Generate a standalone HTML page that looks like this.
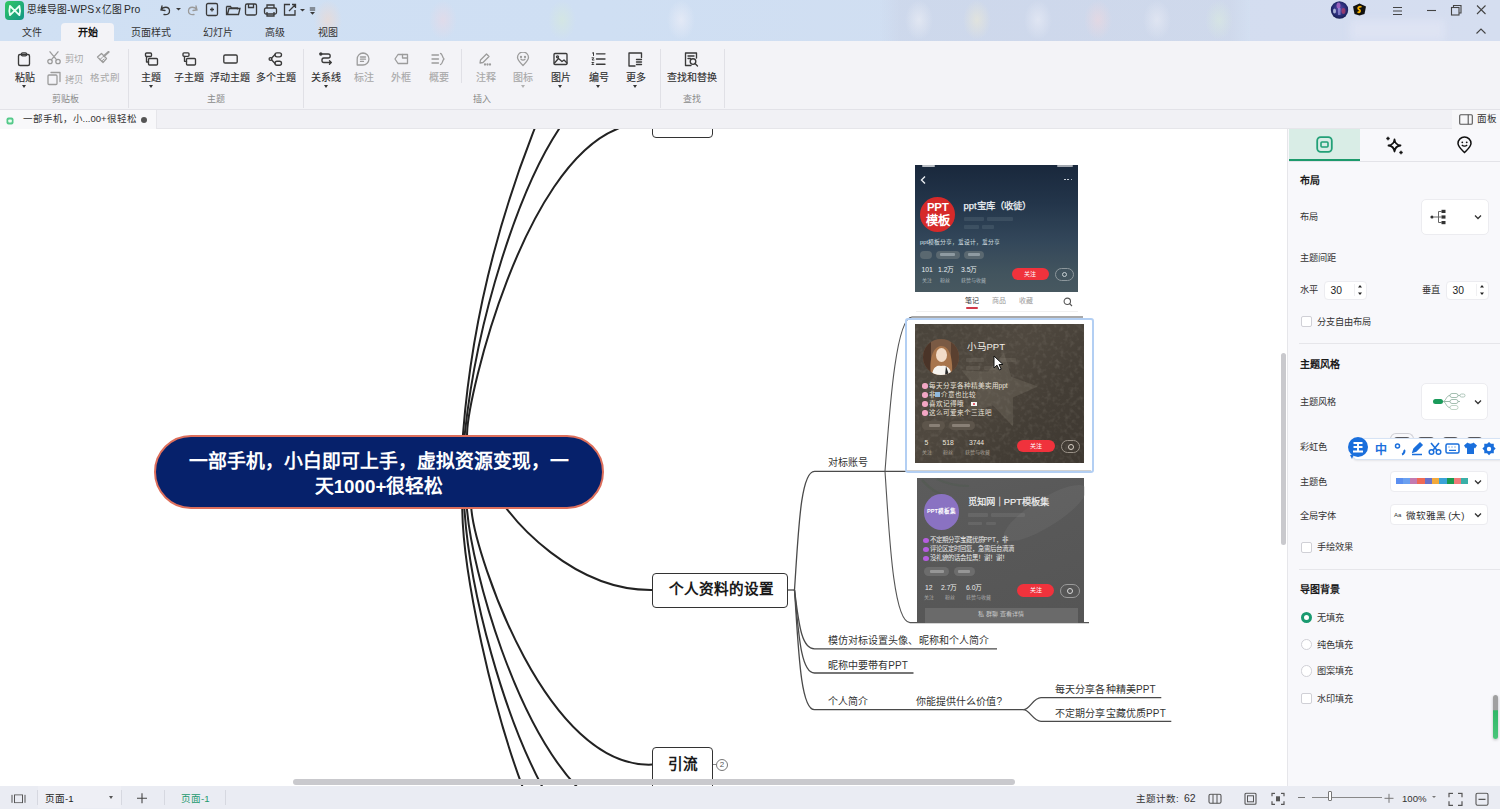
<!DOCTYPE html>
<html lang="zh-CN"><head><meta charset="utf-8">
<style>
*{margin:0;padding:0;box-sizing:border-box}
html,body{width:1500px;height:809px;overflow:hidden;background:#fff;font-family:"Liberation Sans",sans-serif;color:#222}
.a{position:absolute}
#title{left:0;top:0;width:1500px;height:41px;background:linear-gradient(90deg,#d0e0f3 0%,#cfdff3 40%,#d1def1 70%,#d5e0f1 100%)}
#ribbon{left:0;top:41px;width:1500px;height:69px;background:#f3f3f7;border-bottom:1px solid #e2e2e8}
#doctabs{left:0;top:110px;width:1500px;height:19px;background:#f1f1f5;border-bottom:1px solid #e6e6ea}
#canvas{left:0;top:129px;width:1287px;height:657px;background:#fff;overflow:hidden}
#panel{left:1287px;top:129px;width:213px;height:657px;background:#f8f8fb;border-left:1px solid #e6e6ea}
#status{left:0;top:786px;width:1500px;height:23px;background:#eaecf3}
.t{position:absolute;white-space:nowrap;line-height:1}
#status .t,#status svg{transform:translateY(1.3px)}
#panel .t{transform:translateY(.9px)}
</style></head>
<body>
<div id="title" class="a">
<div class="a" style="left:0;top:0;width:1500px;height:42px;background:radial-gradient(ellipse 14px 20px at 328px 20px,rgba(245,215,200,.55),transparent),radial-gradient(ellipse 14px 20px at 443px 20px,rgba(240,215,225,.5),transparent),radial-gradient(ellipse 14px 20px at 562px 20px,rgba(215,235,215,.55),transparent),radial-gradient(ellipse 14px 20px at 681px 20px,rgba(240,240,248,.6),transparent),radial-gradient(ellipse 14px 20px at 919px 20px,rgba(238,240,246,.6),transparent),radial-gradient(ellipse 14px 20px at 977px 20px,rgba(240,235,210,.55),transparent),radial-gradient(ellipse 14px 20px at 1038px 20px,rgba(238,240,248,.55),transparent),radial-gradient(ellipse 14px 20px at 1098px 20px,rgba(242,215,220,.55),transparent),radial-gradient(ellipse 14px 20px at 1157px 20px,rgba(236,238,246,.55),transparent),radial-gradient(ellipse 14px 20px at 1219px 20px,rgba(220,238,220,.5),transparent),linear-gradient(90deg,rgba(0,0,0,0) 880px,rgba(200,205,225,.35) 900px,rgba(200,205,225,.35) 1230px,rgba(0,0,0,0) 1250px)"></div><div class="a" style="left:1350px;top:20px;width:95px;height:21px;background:rgba(235,238,248,.55);filter:blur(4px)"></div><div class="a" style="left:1250px;top:0;width:250px;height:41px;background:rgba(215,215,240,.25)"></div>
<svg class="a" style="left:5px;top:1px" width="19" height="19" viewBox="0 0 19 19"><defs><linearGradient id="lg" x1="0" y1="0" x2="1" y2="1"><stop offset="0" stop-color="#30c865"/><stop offset="1" stop-color="#129585"/></linearGradient></defs><rect width="19" height="19" rx="4" fill="url(#lg)"/><path d="M5 5 C4.2 8 4.2 11.5 5 14.2 L9.6 9.6 Z M14.4 5 C15.2 8 15.2 11.5 14.4 14.2 L9.8 9.6 Z" fill="none" stroke="#eafff4" stroke-width="1.8" stroke-linejoin="round"/></svg>
<div class="t" style="left:27px;top:4.5px;font-size:9.8px;color:#2a2a2a">思维导图<span style="font-size:10.4px;word-spacing:-1.5px">-WPS x </span>亿图<span style="font-size:10.4px;word-spacing:-1px"> Pro</span></div>
<svg class="a" style="left:158px;top:1.8px" width="160" height="16" viewBox="0 0 160 16" fill="none" stroke="#3a3a3a" stroke-width="1.3">
<path d="M4 4 L3 8 L7 8.5 M3.2 8 C5 4.5 11 4 11.5 8.5 C12 12 9 13 6 12.5" stroke-linecap="round"/>
<path d="M18 6 l2.5 2.5 l2.5 -2.5z" fill="#3a3a3a" stroke="none"/>
<path d="M38 4 L39 8 L35 8.5 M38.8 8 C37 4.5 31 4 30.5 8.5 C30 12 33 13 36 12.5" stroke="#9a9a9a" stroke-linecap="round"/>
<rect x="48.5" y="1.5" width="11" height="12" rx="1.5"/><path d="M54 5.5v4M52 7.5h4"/>
<path d="M68.5 4.5v8h12l1.5-6h-11l-1.5 6M68.5 4.5h4l1 1.5h6v1.5"/>
<rect x="87.5" y="2" width="11" height="11" rx="1.5"/><path d="M90.5 2v3.5h5V2"/>
<rect x="106.5" y="6" width="12" height="6" rx="1.5"/><path d="M109 6V3h7v3M109 10v4h7v-4"/>
<path d="M132 2.5h-5.5v10.5h10.5v-5M131 9l6.5-6.5M134 2.5h3.5V6"/>
<path d="M142 7 l2.5 2.5 l2.5 -2.5z" fill="#3a3a3a" stroke="none"/>
<path d="M151.8 6h5.4M151.8 8h5.4" stroke-width="1"/><path d="M152 10l2.5 2.8l2.5 -2.8z" fill="#3a3a3a" stroke="none"/>
</svg>
<svg class="a" style="left:1330px;top:1px" width="19" height="18" viewBox="0 0 19 18"><defs><radialGradient id="av" cx=".5" cy=".45" r=".6"><stop offset="0" stop-color="#5a4aa8"/><stop offset=".6" stop-color="#2a2e7a"/><stop offset="1" stop-color="#141a48"/></radialGradient></defs><circle cx="9.5" cy="9" r="8.7" fill="url(#av)"/><ellipse cx="8.5" cy="4.5" rx="2" ry="3" fill="#c070d0" opacity=".7"/><ellipse cx="4.5" cy="10" rx="1.5" ry="2.5" fill="#d0d8f0" opacity=".75"/><ellipse cx="13.5" cy="10" rx="2" ry="3" fill="#d04060" opacity=".6"/><rect x="8" y="7" width="2.5" height="7" fill="#a8a0e8" opacity=".6"/></svg>
<svg class="a" style="left:1352px;top:3px" width="15" height="13" viewBox="0 0 15 13"><path d="M7.5 0.5 L14 3.5 L12.5 11 L7.5 12.5 L2.5 11 L1 3.5Z" fill="#111"/><path d="M9.5 4 C7 3 5 5 7 6.5 C9 7.5 8 10 5.5 9" stroke="#f5b000" stroke-width="1.8" fill="none"/></svg>
<svg class="a" style="left:1390px;top:3px" width="100" height="34" viewBox="0 0 100 34" fill="none" stroke="#444" stroke-width="1.1">
<path d="M3 4.5h9M3 8h9M3 11.5h9"/>
<path d="M37 7.5h9"/>
<rect x="61.5" y="4.5" width="7.5" height="7.5"/><path d="M63.5 4.5V2.5h7.5v7.5h-2"/>
<path d="M87 2.5l8.5 8.5M95.5 2.5L87 11"/>
<path d="M86.5 30.5l4.5-4.5l4.5 4.5"/>
</svg>
<div class="t" style="left:22px;top:28.3px;font-size:10px;color:#333">文件</div>
<div class="a" style="left:61px;top:23px;width:53px;height:19px;background:#f3f3f7;border-radius:4px 4px 0 0"></div>
<div class="t" style="left:78px;top:28.3px;font-size:10px;color:#111;font-weight:bold">开始</div>
<div class="t" style="left:131px;top:28.3px;font-size:10px;color:#333">页面样式</div>
<div class="t" style="left:203px;top:28.3px;font-size:10px;color:#333">幻灯片</div>
<div class="t" style="left:265px;top:28.3px;font-size:10px;color:#333">高级</div>
<div class="t" style="left:318px;top:28.3px;font-size:10px;color:#333">视图</div>
</div>
<div id="ribbon" class="a">
<svg class="a" style="left:17.0px;top:11px" width="15" height="15" viewBox="0 0 15 15" fill="none" stroke="#3a3a3a" stroke-width="1.35" stroke-linecap="round" stroke-linejoin="round"><rect x="1.5" y="2.5" width="11" height="11" rx="1.5"/><rect x="4.5" y="0.8" width="5" height="3" rx="1"/></svg>
<div class="t" style="left:14.5px;top:32px;width:20px;text-align:center;font-size:10px;color:#2e2e2e;-webkit-text-stroke:.12px #2e2e2e">粘贴</div>
<div class="a" style="left:22.0px;top:44px;width:0;height:0;border-left:2.5px solid transparent;border-right:2.5px solid transparent;border-top:3px solid #333"></div>
<svg class="a" style="left:143.5px;top:11px" width="15" height="15" viewBox="0 0 15 15" fill="none" stroke="#3a3a3a" stroke-width="1.35" stroke-linecap="round" stroke-linejoin="round"><rect x="1.5" y="1" width="6" height="3.5" rx="1"/><path d="M2.5 4.5v5.5h2"/><rect x="4.5" y="6.5" width="9" height="6.5" rx="1"/></svg>
<div class="t" style="left:141.0px;top:32px;width:20px;text-align:center;font-size:10px;color:#2e2e2e;-webkit-text-stroke:.12px #2e2e2e">主题</div>
<div class="a" style="left:148.5px;top:44px;width:0;height:0;border-left:2.5px solid transparent;border-right:2.5px solid transparent;border-top:3px solid #333"></div>
<svg class="a" style="left:181.5px;top:11px" width="15" height="15" viewBox="0 0 15 15" fill="none" stroke="#3a3a3a" stroke-width="1.35" stroke-linecap="round" stroke-linejoin="round"><rect x="1" y="0.8" width="6" height="3.5" rx="1"/><path d="M2.5 4.3v5h2"/><rect x="4.5" y="6.5" width="9" height="6.5" rx="1"/></svg>
<div class="t" style="left:174.0px;top:32px;width:30px;text-align:center;font-size:10px;color:#2e2e2e;-webkit-text-stroke:.12px #2e2e2e">子主题</div>
<svg class="a" style="left:222.5px;top:11px" width="15" height="15" viewBox="0 0 15 15" fill="none" stroke="#3a3a3a" stroke-width="1.35" stroke-linecap="round" stroke-linejoin="round"><rect x="0.8" y="3" width="13.4" height="8" rx="1.3"/></svg>
<div class="t" style="left:210.0px;top:32px;width:40px;text-align:center;font-size:10px;color:#2e2e2e;-webkit-text-stroke:.12px #2e2e2e">浮动主题</div>
<svg class="a" style="left:268.0px;top:11px" width="15" height="15" viewBox="0 0 15 15" fill="none" stroke="#3a3a3a" stroke-width="1.35" stroke-linecap="round" stroke-linejoin="round"><circle cx="2.5" cy="7" r="1.4"/><path d="M3.5 6.2L7 2.5M3.5 7.8L7 11.5"/><rect x="7" y="0.8" width="6.5" height="4" rx="2"/><rect x="7" y="9.2" width="6.5" height="4" rx="2"/></svg>
<div class="t" style="left:255.5px;top:32px;width:40px;text-align:center;font-size:10px;color:#2e2e2e;-webkit-text-stroke:.12px #2e2e2e">多个主题</div>
<svg class="a" style="left:318.5px;top:11px" width="15" height="15" viewBox="0 0 15 15" fill="none" stroke="#3a3a3a" stroke-width="1.35" stroke-linecap="round" stroke-linejoin="round"><circle cx="1.8" cy="2" r="1" fill="#3c3c3c"/><path d="M1.8 2h7.5c2.5 0 2.5 4 0 4h-4.5c-2.5 0-2.5 4.5 0 4.5h7.5M10.5 8.8l1.8 1.7l-1.8 1.7"/></svg>
<div class="t" style="left:311.0px;top:32px;width:30px;text-align:center;font-size:10px;color:#2e2e2e;-webkit-text-stroke:.12px #2e2e2e">关系线</div>
<div class="a" style="left:323.5px;top:44px;width:0;height:0;border-left:2.5px solid transparent;border-right:2.5px solid transparent;border-top:3px solid #333"></div>
<svg class="a" style="left:356.0px;top:11px" width="15" height="15" viewBox="0 0 15 15" fill="none" stroke="#9c9c9c" stroke-width="1.3" stroke-linecap="round" stroke-linejoin="round"><path d="M7 1a6 6 0 1 1-0.1 12h-5.7v-5.8A6 6 0 0 1 7 1z"/><path d="M4.5 5h5M4.5 7.2h5M4.5 9.4h3"/></svg>
<div class="t" style="left:353.5px;top:32px;width:20px;text-align:center;font-size:10px;color:#a8a8a8;-webkit-text-stroke:.12px #a8a8a8">标注</div>
<svg class="a" style="left:393.5px;top:11px" width="15" height="15" viewBox="0 0 15 15" fill="none" stroke="#9c9c9c" stroke-width="1.3" stroke-linecap="round" stroke-linejoin="round"><path d="M4 2.5h9.5v9h-9.5l-3-4.5z"/><path d="M8.5 2.5v3.5h5"/></svg>
<div class="t" style="left:391.0px;top:32px;width:20px;text-align:center;font-size:10px;color:#a8a8a8;-webkit-text-stroke:.12px #a8a8a8">外框</div>
<svg class="a" style="left:431.0px;top:11px" width="15" height="15" viewBox="0 0 15 15" fill="none" stroke="#9c9c9c" stroke-width="1.3" stroke-linecap="round" stroke-linejoin="round"><path d="M1 3h6.5M1 7h6.5M1 11h6.5M9.5 1.5c2 0 1.5 3.5 3.5 5.5c-2 2-1.5 5.5-3.5 5.5"/></svg>
<div class="t" style="left:428.5px;top:32px;width:20px;text-align:center;font-size:10px;color:#a8a8a8;-webkit-text-stroke:.12px #a8a8a8">概要</div>
<svg class="a" style="left:478.0px;top:11px" width="15" height="15" viewBox="0 0 15 15" fill="none" stroke="#9c9c9c" stroke-width="1.3" stroke-linecap="round" stroke-linejoin="round"><path d="M2 11l0.5-3l6-6l2.5 2.5l-6 6z"/><circle cx="7" cy="12.5" r=".5" fill="#9c9c9c"/><circle cx="9.5" cy="12.5" r=".5" fill="#9c9c9c"/><circle cx="12" cy="12.5" r=".5" fill="#9c9c9c"/></svg>
<div class="t" style="left:475.5px;top:32px;width:20px;text-align:center;font-size:10px;color:#a8a8a8;-webkit-text-stroke:.12px #a8a8a8">注释</div>
<svg class="a" style="left:515.5px;top:11px" width="15" height="15" viewBox="0 0 15 15" fill="none" stroke="#9c9c9c" stroke-width="1.3" stroke-linecap="round" stroke-linejoin="round"><path d="M7 13.5c-3-3-5.5-5.5-5.5-8a5.5 5.5 0 0 1 11 0c0 2.5-2.5 5-5.5 8z"/><circle cx="5" cy="5" r=".5" fill="#9c9c9c"/><circle cx="9" cy="5" r=".5" fill="#9c9c9c"/><path d="M5 7.3c1 1 3 1 4 0"/></svg>
<div class="t" style="left:513.0px;top:32px;width:20px;text-align:center;font-size:10px;color:#a8a8a8;-webkit-text-stroke:.12px #a8a8a8">图标</div>
<div class="a" style="left:520.5px;top:44px;width:0;height:0;border-left:2.5px solid transparent;border-right:2.5px solid transparent;border-top:3px solid #b0b0b0"></div>
<svg class="a" style="left:553.0px;top:11px" width="15" height="15" viewBox="0 0 15 15" fill="none" stroke="#3a3a3a" stroke-width="1.35" stroke-linecap="round" stroke-linejoin="round"><rect x="1" y="1.5" width="13" height="11" rx="1"/><path d="M1.5 11l4-4.5l3.5 3l2-1.5l3 3"/><circle cx="4.5" cy="4.8" r="1"/></svg>
<div class="t" style="left:550.5px;top:32px;width:20px;text-align:center;font-size:10px;color:#2e2e2e;-webkit-text-stroke:.12px #2e2e2e">图片</div>
<div class="a" style="left:558.0px;top:44px;width:0;height:0;border-left:2.5px solid transparent;border-right:2.5px solid transparent;border-top:3px solid #333"></div>
<svg class="a" style="left:591.0px;top:11px" width="15" height="15" viewBox="0 0 15 15" fill="none" stroke="#3a3a3a" stroke-width="1.35" stroke-linecap="round" stroke-linejoin="round"><path d="M5.5 1.8h8.5M5.5 7h8.5M5.5 12.2h8.5"/><path d="M1.5 1l1-.5v3" stroke-width="1"/><path d="M1 5.8h1.8l-1.8 2.2h2" stroke-width="1"/><path d="M1 10.5h1.8l-1 1l1 1h-1.8" stroke-width="1"/></svg>
<div class="t" style="left:588.5px;top:32px;width:20px;text-align:center;font-size:10px;color:#2e2e2e;-webkit-text-stroke:.12px #2e2e2e">编号</div>
<div class="a" style="left:596.0px;top:44px;width:0;height:0;border-left:2.5px solid transparent;border-right:2.5px solid transparent;border-top:3px solid #333"></div>
<svg class="a" style="left:628.0px;top:11px" width="15" height="15" viewBox="0 0 15 15" fill="none" stroke="#3a3a3a" stroke-width="1.35" stroke-linecap="round" stroke-linejoin="round"><path d="M13.5 5.5v-4.5h-12.5v13h6"/><path d="M8.5 7.5h5M8.5 10h5M8.5 12.5h5"/></svg>
<div class="t" style="left:625.5px;top:32px;width:20px;text-align:center;font-size:10px;color:#2e2e2e;-webkit-text-stroke:.12px #2e2e2e">更多</div>
<div class="a" style="left:633.0px;top:44px;width:0;height:0;border-left:2.5px solid transparent;border-right:2.5px solid transparent;border-top:3px solid #333"></div>
<svg class="a" style="left:684.0px;top:11px" width="15" height="15" viewBox="0 0 15 15" fill="none" stroke="#3a3a3a" stroke-width="1.35" stroke-linecap="round" stroke-linejoin="round"><path d="M7 13.5h-5.5v-12.5h11v5"/><path d="M4 4h6M4 6.5h2.5"/><circle cx="9" cy="9.5" r="2.8"/><path d="M11 11.5l2.5 2.5"/></svg>
<div class="t" style="left:666.5px;top:32px;width:50px;text-align:center;font-size:10px;color:#2e2e2e;-webkit-text-stroke:.12px #2e2e2e">查找和替换</div>
<svg class="a" style="left:47px;top:10px" width="15" height="15" viewBox="0 0 15 15" fill="none" stroke="#9c9c9c" stroke-width="1.3" stroke-linecap="round" stroke-linejoin="round"><circle cx="3" cy="10.5" r="2.2"/><circle cx="11" cy="10.5" r="2.2"/><path d="M4.3 8.8L11 0.8M9.7 8.8L3 0.8"/></svg>
<div class="t" style="left:65px;top:13.5px;font-size:9.3px;color:#a8a8a8">剪切</div>
<svg class="a" style="left:47px;top:30px" width="15" height="15" viewBox="0 0 15 15" fill="none" stroke="#9c9c9c" stroke-width="1.3" stroke-linecap="round" stroke-linejoin="round"><rect x="1" y="4" width="9" height="9.5" rx="1"/><path d="M4 1.5h9v9"/></svg>
<div class="t" style="left:65px;top:34.5px;font-size:9.3px;color:#a8a8a8">拷贝</div>
<svg class="a" style="left:96px;top:10px" width="15" height="15" viewBox="0 0 15 15" fill="none" stroke="#9c9c9c" stroke-width="1.3" stroke-linecap="round" stroke-linejoin="round"><path d="M1.5 6 L5.5 2.5 L10.5 7.5 L7 11.5 Z"/><path d="M4 8.5 L6.5 6.2 M5.8 10 L8 8" stroke-width="1"/><path d="M8 5 L12.5 1" stroke-width="2.2"/></svg>
<div class="t" style="left:90px;top:32px;font-size:9.5px;color:#a8a8a8">格式刷</div>
<div class="t" style="left:52.0px;top:54px;width:27px;text-align:center;font-size:9px;color:#8a8a8a">剪贴板</div>
<div class="t" style="left:207.0px;top:54px;width:18px;text-align:center;font-size:9px;color:#8a8a8a">主题</div>
<div class="t" style="left:472.5px;top:54px;width:18px;text-align:center;font-size:9px;color:#8a8a8a">插入</div>
<div class="t" style="left:683.0px;top:54px;width:18px;text-align:center;font-size:9px;color:#8a8a8a">查找</div>
<div class="a" style="left:128px;top:8px;width:1px;height:59px;background:#e0e0e6"></div>
<div class="a" style="left:303px;top:8px;width:1px;height:59px;background:#e0e0e6"></div>
<div class="a" style="left:461px;top:8px;width:1px;height:34px;background:#e0e0e6"></div>
<div class="a" style="left:659.5px;top:8px;width:1px;height:59px;background:#e0e0e6"></div>
<div class="a" style="left:724px;top:8px;width:1px;height:59px;background:#e0e0e6"></div>
</div><!--ribbon-end-->
<div id="doctabs" class="a">
<div class="a" style="left:0;top:0;width:157px;height:19px;background:#f8f8fa;border-right:1px solid #e6e6ea"></div>
<svg class="a" style="left:6px;top:6px" width="9" height="9" viewBox="0 0 9 9"><rect x=".5" y="1.5" width="7" height="7" rx="2" fill="#55c98a"/><rect x="2.3" y="3.5" width="3.5" height="3" rx=".8" fill="#e8fff0"/></svg>
<div class="t" style="left:22.5px;top:3.8px;font-size:9.5px;color:#333">一部手机，小...00+很轻松</div>
<div class="a" style="left:141px;top:6.5px;width:6px;height:6px;border-radius:50%;background:#555"></div>
<div class="a" style="left:1452px;top:0;width:48px;height:19px;background:#f7f7f9"></div>
<svg class="a" style="left:1459px;top:4px" width="14" height="11" viewBox="0 0 14 11"><rect x=".7" y=".7" width="12.6" height="9.6" rx="1" stroke="#555" stroke-width="1.1" fill="none"/><path d="M9.2 .7v9.6" stroke="#555" stroke-width="1.1"/></svg>
<div class="t" style="left:1477px;top:4px;font-size:9.6px;color:#333">面板</div>
</div><!--doctabs-end-->
<div id="canvas" class="a"><svg class="a" style="left:0;top:0" width="1287" height="658" viewBox="0 129 1287 658"><path d="M462.3,442.9 L463.1,432.9 C475.6,273.4 523.4,158.0 534.5,129.0 L538.8,117.8" fill="none" stroke="#222" stroke-width="2"/><path d="M463.9,442.8 L464.9,432.9 C477.2,316.3 519.1,189.0 559.0,129.0 L565.5,118.9" fill="none" stroke="#222" stroke-width="2"/><path d="M466.8,442.9 L467.1,432.9 C468.3,393.2 522.8,167.2 617.0,129.0 L627.9,123.9" fill="none" stroke="#222" stroke-width="2"/><path d="M462.1,500.6 L462.3,510.6 C463.3,574.3 491.6,706.1 524.5095539033457,792.0" fill="none" stroke="#222" stroke-width="2"/><path d="M463.8,500.6 L464.5,510.6 C470.3,593.6 503.4,715.9 545.1026022304833,792.0" fill="none" stroke="#222" stroke-width="2"/><path d="M466.2,500.6 L467.1,510.6 C472.7,572.3 515.2,726.2 581.9734944237917,792.0" fill="none" stroke="#222" stroke-width="2"/><path d="M470.5,500.7 L471.5,510.6 C476.5,558.5 546.9,768.9 652.0,764.6" fill="none" stroke="#222" stroke-width="2"/><path d="M501.7,502.4 L507.9,510.3 C511.6,515.1 569.8,590.8 652.0,590.0" fill="none" stroke="#222" stroke-width="2"/><path d="M787,590 L794.5,590" fill="none" stroke="#4a4a4a" stroke-width="1.3"/><path d="M794.5,590 C798.5,530.65 800.5,471.3 814.5,471.3 L1091,471.3" fill="none" stroke="#4a4a4a" stroke-width="1.3"/><path d="M794.5,590 C798.5,619.4 800.5,648.8 814.5,648.8 L997,648.8" fill="none" stroke="#4a4a4a" stroke-width="1.3"/><path d="M794.5,590 C798.5,631.5 800.5,673 814.5,673 L913.5,673" fill="none" stroke="#4a4a4a" stroke-width="1.3"/><path d="M794.5,590 C798.5,649.85 800.5,709.7 814.5,709.7 L1023.3,709.7" fill="none" stroke="#4a4a4a" stroke-width="1.3"/><path d="M885,471.3 C889,420 895,317 912,317 L1083,317" fill="none" stroke="#555" stroke-width="1.1"/><path d="M885,471.3 C889,530 893,622.6 910,622.6 L1089,622.6" fill="none" stroke="#555" stroke-width="1.1"/><path d="M1023.3,709.7 C1030,709.7 1033,697.6 1041,697.6 L1161.3,697.6" fill="none" stroke="#4a4a4a" stroke-width="1.3"/><path d="M1023.3,709.7 C1030,709.7 1033,721.3 1041,721.3 L1171.3,721.3" fill="none" stroke="#4a4a4a" stroke-width="1.3"/></svg>
<div class="a" style="left:154px;top:305.5px;width:450px;height:74.5px;border-radius:38px;background:#06216b;border:2.2px solid #dd6f5c"></div>
<div class="t" style="left:154px;top:320px;width:450px;text-align:center;font-size:18.8px;font-weight:bold;color:#fff;line-height:25px">一部手机，小白即可上手，虚拟资源变现，一<br>天1000+很轻松</div>
<div class="a" style="left:652px;top:-20px;width:61px;height:28.5px;border:1.8px solid #333;border-radius:4px;background:#fff"></div>
<div class="a" style="left:652px;top:444.3px;width:136px;height:34.5px;border:1.8px solid #333;border-radius:4px;background:#fff"></div>
<div class="t" style="left:653px;top:453.3px;width:136px;text-align:center;font-size:14.6px;font-weight:bold;color:#1a1a1a">个人资料的设置</div>
<div class="a" style="left:652px;top:617.8px;width:61px;height:50px;border:1.8px solid #333;border-radius:4px;background:#fff"></div>
<div class="t" style="left:652.5px;top:627.8px;width:61px;text-align:center;font-size:14.6px;font-weight:bold;color:#1a1a1a">引流</div>
<div class="a" style="left:713px;top:635.2px;width:3px;height:1px;background:#888"></div><div class="a" style="left:716px;top:629.6px;width:12px;height:12px;border:1px solid #777;border-radius:50%;font-size:8px;line-height:10px;text-align:center;color:#555">2</div>
<div class="t" style="left:827.5px;top:328.5px;font-size:10px;letter-spacing:.1px;color:#333">对标账号</div>
<div class="t" style="left:827.5px;top:507px;font-size:10px;letter-spacing:.12px;color:#333">模仿对标设置头像、昵称和个人简介</div>
<div class="t" style="left:827.5px;top:531.5px;font-size:10px;letter-spacing:.12px;color:#333">昵称中要带有PPT</div>
<div class="t" style="left:827.5px;top:567.5px;font-size:10px;letter-spacing:.12px;color:#333">个人简介</div>
<div class="t" style="left:915.5px;top:567.5px;font-size:10px;letter-spacing:.12px;color:#333">你能提供什么价值?</div>
<div class="t" style="left:1055px;top:556px;font-size:10px;letter-spacing:.12px;color:#333">每天分享各种精美PPT</div>
<div class="t" style="left:1055px;top:580px;font-size:10px;letter-spacing:.12px;color:#333">不定期分享宝藏优质PPT</div>
<div class="a" style="left:915px;top:36px;width:163px;height:126.5px;background:linear-gradient(180deg,#19283c 0%,#23354a 30%,#33475a 60%,#42545e 85%,#475860 100%)"></div>
<div class="a" style="left:922px;top:36px;width:13px;height:2px;background:rgba(255,255,255,.7);border-radius:1px"></div>
<div class="a" style="left:1057px;top:36px;width:16px;height:2px;background:rgba(255,255,255,.6);border-radius:1px"></div>
<svg class="a" style="left:919px;top:46px" width="10" height="10" viewBox="0 0 10 10"><path d="M6 1.5L2.5 5L6 8.5" stroke="#e8ecf0" stroke-width="1.4" fill="none"/></svg>
<div class="a" style="left:1064.0px;top:49.5px;width:1.6px;height:1.6px;background:#dfe4ea;border-radius:50%"></div>
<div class="a" style="left:1067.3px;top:49.5px;width:1.6px;height:1.6px;background:#dfe4ea;border-radius:50%"></div>
<div class="a" style="left:1070.6px;top:49.5px;width:1.6px;height:1.6px;background:#dfe4ea;border-radius:50%"></div>
<div class="a" style="left:920px;top:67.6px;width:35.4px;height:35.4px;background:#d62a2a;border-radius:50%"></div>
<div class="t" style="left:920px;top:72.5px;width:35.4px;text-align:center;font-size:11.5px;font-weight:bold;color:#fff;letter-spacing:-.3px">PPT</div>
<div class="t" style="left:920px;top:85.6px;width:35.4px;text-align:center;font-size:12.3px;font-weight:bold;color:#fff">模板</div>
<div class="t" style="left:963.5px;top:72px;font-size:9.4px;color:#eef2f5;-webkit-text-stroke:.25px #eef2f5">ppt宝库（收徒）</div>
<div class="a" style="left:964px;top:88px;width:20px;height:3.5px;background:rgba(150,165,175,.16);border-radius:1px"></div>
<div class="a" style="left:987px;top:88px;width:26px;height:3.5px;background:rgba(150,165,175,.16);border-radius:1px"></div>
<div class="a" style="left:964px;top:96px;width:15px;height:3.5px;background:rgba(150,165,175,.16);border-radius:1px"></div>
<div class="a" style="left:982px;top:96px;width:12px;height:3.5px;background:rgba(150,165,175,.16);border-radius:1px"></div>
<div class="t" style="left:920px;top:111px;font-size:5.8px;color:#d9e0e5">ppt模板分享，爱设计，爱分享</div>
<div class="a" style="left:920px;top:121.5px;width:12px;height:8.5px;background:#5a6870;border-radius:5px"></div>
<div class="a" style="left:935.5px;top:121.5px;width:24.5px;height:8.5px;background:#5a6870;border-radius:5px"></div>
<div class="a" style="left:964px;top:121.5px;width:20px;height:8.5px;background:#5a6870;border-radius:5px"></div>
<div class="a" style="left:940px;top:124px;width:15px;height:3px;background:rgba(220,230,235,.4);border-radius:1px"></div>
<div class="a" style="left:968px;top:124px;width:12px;height:3px;background:rgba(220,230,235,.4);border-radius:1px"></div>
<div class="t" style="left:921.5px;top:138.3px;font-size:6.8px;color:#e8edf0">101</div>
<div class="t" style="left:938px;top:138.3px;font-size:6.8px;color:#e8edf0">1.2万</div>
<div class="t" style="left:961px;top:138.3px;font-size:6.8px;color:#e8edf0">3.5万</div>
<div class="t" style="left:922px;top:148.5px;font-size:5px;color:#a9b4ba">关注</div>
<div class="t" style="left:940px;top:148.5px;font-size:5px;color:#a9b4ba">粉丝</div>
<div class="t" style="left:961px;top:148.5px;font-size:5px;color:#a9b4ba">获赞与收藏</div>
<div class="a" style="left:1011.5px;top:139.3px;width:37px;height:12.2px;background:#f0323c;border-radius:6px"></div>
<div class="t" style="left:1011.5px;top:142px;width:37px;text-align:center;font-size:6px;color:#fff">关注</div>
<div class="a" style="left:1055px;top:139px;width:18.5px;height:13px;border:1px solid #8d979c;border-radius:7px"></div>
<div class="a" style="left:1061.5px;top:142.7px;width:5.5px;height:5.5px;border:1.2px solid #c8d0d4;border-radius:50%"></div>
<div class="t" style="left:965px;top:167.5px;font-size:7px;color:#333">笔记</div>
<div class="a" style="left:965.5px;top:178px;width:12px;height:1.5px;background:#d23a4a;border-radius:1px"></div>
<div class="t" style="left:992px;top:167.5px;font-size:7px;color:#9a9a9a">商品</div>
<div class="t" style="left:1019px;top:167.5px;font-size:7px;color:#9a9a9a">收藏</div>
<svg class="a" style="left:1063px;top:168px" width="10" height="10" viewBox="0 0 10 10"><circle cx="4.3" cy="4.3" r="3.2" stroke="#555" stroke-width="1.1" fill="none"/><path d="M6.6 6.6L9 9" stroke="#555" stroke-width="1.1"/></svg>
<div class="a" style="left:916px;top:181.5px;width:162px;height:1px;background:#f0f0f0"></div>
<div class="a" style="left:905.3px;top:189.3px;width:188.5px;height:154.5px;border:2px solid #b3cff3;border-radius:3px"></div>
<div class="a" style="left:915.2px;top:195px;width:169px;height:139px;background:radial-gradient(ellipse 40px 50px at 960px 390px,rgba(120,110,95,.0),transparent),linear-gradient(135deg,#4a443b 0%,#4f483f 40%,#433d35 70%,#3e3831 100%)"></div>
<svg class="a" style="left:915px;top:195px" width="170" height="139" viewBox="0 0 170 139"><defs><filter id="tx" x="0" y="0" width="100%" height="100%"><feTurbulence type="fractalNoise" baseFrequency=".22" numOctaves="2" seed="3"/><feColorMatrix values="0 0 0 0 .75  0 0 0 0 .7  0 0 0 0 .62  0 0 0 1.6 -.75"/></filter></defs><rect width="170" height="139" filter="url(#tx)" opacity=".16"/><path d="M82 28 L94 50 L122 54 L100 70 L106 98 L82 82 L56 96 L64 70 L44 54 L70 50 Z" fill="rgba(130,122,108,.3)" transform="rotate(12 82 62)"/></svg>
<svg class="a" style="left:922.6px;top:209.5px" width="36" height="36" viewBox="0 0 36 36"><defs><clipPath id="avc"><circle cx="18" cy="18" r="18"/></clipPath></defs><g clip-path="url(#avc)"><rect width="36" height="36" fill="#7a5a44"/><rect x="0" y="0" width="8" height="36" fill="#4a3428"/><rect x="28" y="0" width="8" height="36" fill="#5a4030"/><path d="M8 36 C6 22 9 8 18 7 C27 7 30 20 29 36Z" fill="#a8754c"/><ellipse cx="18.5" cy="16" rx="5.5" ry="7" fill="#f2dcc8"/><path d="M9 36 C10 28 14 26 18 27 C23 26 27 28 29 36Z" fill="#f7f4ef"/><path d="M23 27 L26 36 L22 36Z" fill="#2a2a2a"/></g></svg>
<div class="t" style="left:966.5px;top:213.3px;font-size:9.5px;color:#f2eee8">小马PPT</div>
<div class="a" style="left:966px;top:229px;width:18px;height:3.5px;background:rgba(170,160,150,.16);border-radius:1px"></div>
<div class="a" style="left:1000px;top:229px;width:16px;height:3.5px;background:rgba(170,160,150,.14);border-radius:1px"></div>
<div class="a" style="left:966px;top:237px;width:14px;height:3.5px;background:rgba(170,160,150,.16);border-radius:1px"></div>
<div class="a" style="left:984px;top:237px;width:12px;height:3.5px;background:rgba(170,160,150,.14);border-radius:1px"></div>
<div class="a" style="left:922px;top:254.3px;width:5.5px;height:5.5px;background:#f2a6c4;border-radius:50%"></div>
<div class="t" style="left:928.5px;top:253.5px;font-size:6.6px;color:#e8e2da">每天分享各种精美实用ppt</div>
<div class="a" style="left:922px;top:263.3px;width:5.5px;height:5.5px;background:#f2a6c4;border-radius:50%"></div>
<div class="t" style="left:928.5px;top:262.5px;font-size:6.6px;color:#e8e2da">非&nbsp;&nbsp;&nbsp;介意也比较</div>
<div class="a" style="left:922px;top:272.3px;width:5.5px;height:5.5px;background:#f2a6c4;border-radius:50%"></div>
<div class="t" style="left:928.5px;top:271.5px;font-size:6.6px;color:#e8e2da">喜欢记得哦</div>
<div class="a" style="left:922px;top:281.3px;width:5.5px;height:5.5px;background:#f2a6c4;border-radius:50%"></div>
<div class="t" style="left:928.5px;top:280.5px;font-size:6.6px;color:#e8e2da">这么可爱来个三连吧</div>
<div class="a" style="left:934.5px;top:263.3px;width:5.5px;height:4.8px;background:#8fb8dc"></div>
<div class="a" style="left:970.5px;top:272.5px;width:6.5px;height:4.5px;background:#f4f4f4"></div>
<div class="a" style="left:972.5px;top:273.5px;width:2.5px;height:2.5px;background:#e03040;border-radius:50%"></div>
<div class="a" style="left:922.4px;top:292px;width:22.6px;height:9.3px;background:#5d554b;border-radius:5px"></div>
<div class="a" style="left:948.7px;top:292px;width:26.3px;height:9.3px;background:#5d554b;border-radius:5px"></div>
<div class="a" style="left:929px;top:295px;width:11px;height:3px;background:rgba(220,210,200,.35);border-radius:1px"></div>
<div class="a" style="left:952px;top:295px;width:18px;height:3px;background:rgba(220,210,200,.35);border-radius:1px"></div>
<div class="t" style="left:924.5px;top:310.5px;font-size:6.8px;color:#ece6de">5</div>
<div class="t" style="left:942.5px;top:310.5px;font-size:6.8px;color:#ece6de">518</div>
<div class="t" style="left:969px;top:310.5px;font-size:6.8px;color:#ece6de">3744</div>
<div class="t" style="left:922px;top:320.5px;font-size:5px;color:#a8a096">关注</div>
<div class="t" style="left:943px;top:320.5px;font-size:5px;color:#a8a096">粉丝</div>
<div class="t" style="left:965px;top:320.5px;font-size:5px;color:#a8a096">获赞与收藏</div>
<div class="a" style="left:1017.2px;top:310.6px;width:37.8px;height:12.4px;background:#f0323c;border-radius:6.5px"></div>
<div class="t" style="left:1017.2px;top:313.5px;width:37.8px;text-align:center;font-size:6px;color:#fff">关注</div>
<div class="a" style="left:1060.7px;top:311px;width:19.3px;height:13px;border:1px solid #9a9288;border-radius:7px"></div>
<div class="a" style="left:1067.5px;top:314.5px;width:6px;height:6px;border:1.2px solid #d8d0c6;border-radius:50%"></div>
<svg class="a" style="left:992.5px;top:226px" width="11" height="16" viewBox="0 0 11 16"><path d="M1 1 L1 13 L4 10.2 L6.3 15 L8.2 14.1 L6 9.5 L10 9.5 Z" fill="#fff" stroke="#111" stroke-width="1"/></svg>
<div class="a" style="left:916.8px;top:349px;width:167.4px;height:144.5px;background:linear-gradient(160deg,#5c5c5c 0%,#585858 50%,#555 100%)"></div>
<svg class="a" style="left:917px;top:349px" width="168" height="145" viewBox="0 0 168 145"><ellipse cx="128" cy="35" rx="48" ry="14" transform="rotate(-32 128 35)" fill="rgba(130,130,130,.2)"/><path d="M5 2 C12 10 20 16 30 18" stroke="#4a5a48" stroke-width="2.5" fill="none" opacity=".35"/><path d="M20 1 C30 6 40 8 52 8" stroke="#4a5a48" stroke-width="2" fill="none" opacity=".3"/></svg>
<div class="a" style="left:923.7px;top:365.2px;width:35.7px;height:35.7px;background:#8a72c2;border-radius:50%"></div>
<div class="t" style="left:923.7px;top:380px;width:35.7px;text-align:center;font-size:5.6px;font-weight:bold;color:#fff">PPT模板集</div>
<div class="t" style="left:967.8px;top:368.8px;font-size:9.3px;color:#f2f2f2;-webkit-text-stroke:.2px #f2f2f2">觅知网｜PPT模板集</div>
<div class="a" style="left:968px;top:384px;width:20px;height:3.5px;background:rgba(175,175,175,.16);border-radius:1px"></div>
<div class="a" style="left:991px;top:384px;width:34px;height:3.5px;background:rgba(175,175,175,.14);border-radius:1px"></div>
<div class="a" style="left:968px;top:392.5px;width:14px;height:3.5px;background:rgba(175,175,175,.16);border-radius:1px"></div>
<div class="a" style="left:986px;top:392.5px;width:10px;height:3.5px;background:rgba(175,175,175,.14);border-radius:1px"></div>
<div class="a" style="left:922.5px;top:408.79999999999995px;width:6px;height:5.5px;background:#b55ee0;border-radius:50% 50% 50% 50%"></div>
<div class="t" style="left:929.5px;top:408px;font-size:6.4px;color:#e8e8e8">不定期分享宝藏优质PPT，非&nbsp;&nbsp;</div>
<div class="a" style="left:922.5px;top:417.79999999999995px;width:6px;height:5.5px;background:#b55ee0;border-radius:50% 50% 50% 50%"></div>
<div class="t" style="left:929.5px;top:417px;font-size:6.4px;color:#e8e8e8">评论区定时回复，急需后台滴滴</div>
<div class="a" style="left:922.5px;top:426.79999999999995px;width:6px;height:5.5px;background:#b55ee0;border-radius:50% 50% 50% 50%"></div>
<div class="t" style="left:929.5px;top:426px;font-size:6.4px;color:#e8e8e8">没礼貌的话会拉黑！谢！谢！</div>
<div class="a" style="left:923.7px;top:438px;width:25px;height:8.5px;background:#6c6c6c;border-radius:5px"></div>
<div class="a" style="left:954px;top:438px;width:20.5px;height:8.5px;background:#6c6c6c;border-radius:5px"></div>
<div class="a" style="left:930px;top:440.5px;width:14px;height:3px;background:rgba(230,230,230,.35);border-radius:1px"></div>
<div class="a" style="left:958px;top:440.5px;width:12px;height:3px;background:rgba(230,230,230,.35);border-radius:1px"></div>
<div class="t" style="left:925px;top:455.5px;font-size:6.8px;color:#eee">12</div>
<div class="t" style="left:941px;top:455.5px;font-size:6.8px;color:#eee">2.7万</div>
<div class="t" style="left:966px;top:455.5px;font-size:6.8px;color:#eee">6.0万</div>
<div class="t" style="left:923.5px;top:465.5px;font-size:5px;color:#aaa">关注</div>
<div class="t" style="left:945px;top:465.5px;font-size:5px;color:#aaa">粉丝</div>
<div class="t" style="left:966px;top:465.5px;font-size:5px;color:#aaa">获赞与收藏</div>
<div class="a" style="left:1017px;top:455px;width:37px;height:13px;background:#f0323c;border-radius:6.5px"></div>
<div class="t" style="left:1017px;top:458px;width:37px;text-align:center;font-size:6px;color:#fff">关注</div>
<div class="a" style="left:1060px;top:455px;width:19.5px;height:13.5px;border:1px solid #9a9a9a;border-radius:7px"></div>
<div class="a" style="left:1066.8px;top:458.70000000000005px;width:6px;height:6px;border:1.2px solid #d8d8d8;border-radius:50%"></div>
<div class="a" style="left:924.5px;top:478.6px;width:153px;height:15px;background:#6a6a6a"></div>
<div class="t" style="left:924.5px;top:482px;width:153px;text-align:center;font-size:6px;color:#c8c8c8">私 群聊  查看详情</div><div class="a" style="left:293px;top:650px;width:722px;height:6px;border-radius:3px;background:#c9c9cd"></div><div class="a" style="left:1281px;top:224px;width:5px;height:192px;border-radius:3px;background:#c9c9cd"></div></div><!--canvas-end-->
<div id="panel" class="a"><div class="a" style="left:1px;top:0px;width:70.5px;height:31px;background:#d9ede6"></div>
<div class="a" style="left:1px;top:29.5px;width:70.5px;height:2.5px;background:#1d9a6c"></div>
<div class="a" style="left:1px;top:32px;width:212px;height:1px;background:#e3e3e8"></div>
<svg class="a" style="left:28px;top:7px" width="17" height="17" viewBox="0 0 17 17" ><rect x="1.2" y="1.2" width="14.6" height="14.6" rx="3.5" stroke="#22a077" stroke-width="1.8" fill="none"/><rect x="5" y="6" width="7" height="5" rx="1" stroke="#22a077" stroke-width="1.6" fill="none"/></svg>
<svg class="a" style="left:97px;top:7px" width="19" height="19" viewBox="0 0 19 19" ><path d="M9.5 3.5 C10 7.5 11.5 9 15.5 9.5 C11.5 10 10 11.5 9.5 15.5 C9 11.5 7.5 10 3.5 9.5 C7.5 9 9 7.5 9.5 3.5Z" stroke="#111" stroke-width="1.8" fill="none" stroke-linejoin="round"/><path d="M3 .8v3.4M1.3 2.5h3.4M16 14.8v3.4M14.3 16.5h3.4" stroke="#111" stroke-width="1.4"/></svg>
<svg class="a" style="left:168px;top:7px" width="17" height="18" viewBox="0 0 17 18" ><path d="M8.5 16.5 C5 13 2 10.5 2 7.5 A6.5 6.5 0 0 1 15 7.5 C15 10.5 12 13 8.5 16.5Z" stroke="#111" stroke-width="1.5" fill="none"/><circle cx="6.3" cy="6.3" r=".9" fill="#111"/><circle cx="10.7" cy="6.3" r=".9" fill="#111"/><path d="M5.8 9c1.5 1.5 3.9 1.5 5.4 0" stroke="#111" stroke-width="1.2" fill="none"/></svg>
<div class="t" style="left:11.799999999999955px;top:45.5px;font-size:10px;font-weight:bold;color:#1a1a1a">布局</div>
<div class="t" style="left:11.799999999999955px;top:82.5px;font-size:9.2px;color:#333">布局</div>
<div class="a" style="left:133px;top:69.5px;width:68px;height:36px;background:#fff;border:1px solid #ececf0;border-radius:5px"></div>
<svg class="a" style="left:141px;top:78px" width="22" height="20" viewBox="0 0 22 20" ><circle cx="3" cy="10" r="1.6" fill="#333"/><path d="M4.5 10h5M9.5 4.5v11M9.5 4.5h3M9.5 10h3M9.5 15.5h3" stroke="#666" stroke-width="1"/><rect x="12.5" y="2.8" width="4" height="3.2" fill="#333"/><rect x="12.5" y="8.4" width="4" height="3.2" fill="#333"/><rect x="12.5" y="14" width="4" height="3.2" fill="#333"/></svg>
<svg class="a" style="left:186px;top:85px" width="8" height="6" viewBox="0 0 8 6" ><path d="M1 1.5l3 3l3-3" stroke="#333" stroke-width="1.3" fill="none"/></svg>
<div class="t" style="left:11.799999999999955px;top:123.5px;font-size:9.2px;color:#333">主题间距</div>
<div class="t" style="left:11.799999999999955px;top:155.5px;font-size:9.2px;color:#333">水平</div>
<div class="a" style="left:36px;top:152px;width:43px;height:18.5px;background:#fff;border:1px solid #ececf0;border-radius:4px"></div>
<div class="t" style="left:42.5px;top:155.5px;font-size:10.3px;color:#222">30</div>
<svg class="a" style="left:68px;top:154px" width="8" height="14" viewBox="0 0 8 14" ><path d="M2 4.5l2-2.5l2 2.5zM2 9.5l2 2.5l2-2.5z" fill="#222"/></svg>
<div class="a" style="left:66px;top:155px;width:1px;height:12px;background:#f0f0f2"></div>
<div class="t" style="left:134px;top:155.5px;font-size:9.2px;color:#333">垂直</div>
<div class="a" style="left:158px;top:152px;width:43px;height:18.5px;background:#fff;border:1px solid #ececf0;border-radius:4px"></div>
<div class="t" style="left:164.5px;top:155.5px;font-size:10.3px;color:#222">30</div>
<svg class="a" style="left:190px;top:154px" width="8" height="14" viewBox="0 0 8 14" ><path d="M2 4.5l2-2.5l2 2.5zM2 9.5l2 2.5l2-2.5z" fill="#222"/></svg>
<div class="a" style="left:188px;top:155px;width:1px;height:12px;background:#f0f0f2"></div>
<div class="a" style="left:13px;top:187px;width:11px;height:11px;background:#fff;border:1px solid #d0d0d6;border-radius:2px"></div>
<div class="t" style="left:29px;top:187.5px;font-size:9.2px;color:#333">分支自由布局</div>
<div class="a" style="left:11px;top:214px;width:202px;height:1px;background:#e6e6ea"></div>
<div class="t" style="left:11.799999999999955px;top:229.5px;font-size:10px;font-weight:bold;color:#1a1a1a">主题风格</div>
<div class="t" style="left:11.799999999999955px;top:268px;font-size:9.2px;color:#333">主题风格</div>
<div class="a" style="left:133px;top:254px;width:67px;height:36.5px;background:#fff;border:1px solid #ececf0;border-radius:5px"></div>
<svg class="a" style="left:144px;top:263px" width="40" height="18" viewBox="0 0 40 18" ><rect x="1" y="7" width="10" height="5" rx="2.5" fill="#1a9a5a"/><path d="M11 9.5 C14 9.5 14 3.5 18 3.5 M11 9.5 H18 M11 9.5 C14 9.5 14 15.5 18 15.5" stroke="#9ab8a8" stroke-width="1" fill="none"/><rect x="18" y="1.5" width="8" height="4" rx="2" stroke="#9ab8a8" stroke-width=".9" fill="none"/><rect x="18" y="7.5" width="8" height="4" rx="2" stroke="#9ab8a8" stroke-width=".9" fill="none"/><rect x="18" y="13.5" width="8" height="4" rx="2" stroke="#b8d0c0" stroke-width=".9" fill="none"/><path d="M26 3.5h2M26 9.5h2" stroke="#9ab8a8" stroke-width=".9"/><rect x="28" y="2" width="5" height="3" rx="1.5" stroke="#9ab8a8" stroke-width=".8" fill="none"/></svg>
<svg class="a" style="left:186px;top:270px" width="8" height="6" viewBox="0 0 8 6" ><path d="M1 1.5l3 3l3-3" stroke="#333" stroke-width="1.3" fill="none"/></svg>
<div class="t" style="left:11.799999999999955px;top:312.5px;font-size:9.2px;color:#333">彩虹色</div>
<div class="a" style="left:102px;top:303.5px;width:23.5px;height:10px;border:1.2px solid #d0d0d6;border-bottom:none;border-radius:6px 6px 0 0"></div>
<div class="a" style="left:106px;top:307.5px;width:15.5px;height:4px;background:#5a5a5e;border-radius:3px 3px 0 0"></div>
<div class="a" style="left:130px;top:307.5px;width:15.5px;height:4px;background:#5a5a5e;border-radius:3px 3px 0 0"></div>
<div class="a" style="left:154.5px;top:307.5px;width:15.5px;height:4px;background:#5a5a5e;border-radius:3px 3px 0 0"></div>
<div class="a" style="left:178.5px;top:307.5px;width:15.5px;height:4px;background:#5a5a5e;border-radius:3px 3px 0 0"></div>
<div class="t" style="left:11.799999999999955px;top:347.5px;font-size:9.2px;color:#333">主题色</div>
<div class="a" style="left:102px;top:341.5px;width:98px;height:21px;background:#fff;border:1px solid #ececf0;border-radius:4px"></div>
<div class="a" style="left:107.5px;top:349px;width:7.3px;height:6px;background:#5b8ff0"></div>
<div class="a" style="left:114.79999999999995px;top:349px;width:7.3px;height:6px;background:#6aa0f0"></div>
<div class="a" style="left:122.09999999999991px;top:349px;width:7.3px;height:6px;background:#c47ab0"></div>
<div class="a" style="left:129.4000000000001px;top:349px;width:7.3px;height:6px;background:#ef6a55"></div>
<div class="a" style="left:136.70000000000005px;top:349px;width:7.3px;height:6px;background:#6a72c8"></div>
<div class="a" style="left:144.0px;top:349px;width:7.3px;height:6px;background:#f2a93b"></div>
<div class="a" style="left:151.29999999999995px;top:349px;width:7.3px;height:6px;background:#3ba3d8"></div>
<div class="a" style="left:158.5999999999999px;top:349px;width:7.3px;height:6px;background:#1a9a50"></div>
<div class="a" style="left:165.9000000000001px;top:349px;width:7.3px;height:6px;background:#f07a7a"></div>
<div class="a" style="left:173.20000000000005px;top:349px;width:7.3px;height:6px;background:#3ab0a8"></div>
<svg class="a" style="left:186px;top:350px" width="8" height="6" viewBox="0 0 8 6" ><path d="M1 1.5l3 3l3-3" stroke="#333" stroke-width="1.3" fill="none"/></svg>
<div class="t" style="left:11.799999999999955px;top:381.5px;font-size:9.2px;color:#333">全局字体</div>
<div class="a" style="left:102px;top:375px;width:98px;height:21px;background:#fff;border:1px solid #ececf0;border-radius:4px"></div>
<div class="t" style="left:106px;top:382px;font-size:6px;color:#333">Aa</div>
<div class="t" style="left:117.5px;top:380.5px;font-size:9.6px;color:#333">微软雅黑 (大)</div>
<svg class="a" style="left:186px;top:383px" width="8" height="6" viewBox="0 0 8 6" ><path d="M1 1.5l3 3l3-3" stroke="#333" stroke-width="1.3" fill="none"/></svg>
<div class="a" style="left:13px;top:412.5px;width:11px;height:11px;background:#fff;border:1px solid #d0d0d6;border-radius:2px"></div>
<div class="t" style="left:29px;top:413px;font-size:9.2px;color:#333">手绘效果</div>
<div class="a" style="left:11px;top:439.5px;width:202px;height:1px;background:#e6e6ea"></div>
<div class="t" style="left:11.799999999999955px;top:454.5px;font-size:10px;font-weight:bold;color:#1a1a1a">导图背景</div>
<div class="a" style="left:12.5px;top:482.5px;width:11.5px;height:11.5px;background:#fff;border:3.3px solid #1a9a70;border-radius:50%"></div>
<div class="t" style="left:28.5px;top:483.5px;font-size:9.2px;color:#333">无填充</div>
<div class="a" style="left:12.5px;top:509.5px;width:11.5px;height:11.5px;background:#fff;border:1px solid #d0d0d6;border-radius:50%"></div>
<div class="t" style="left:28.5px;top:510.5px;font-size:9.2px;color:#333">纯色填充</div>
<div class="a" style="left:12.5px;top:536px;width:11.5px;height:11.5px;background:#fff;border:1px solid #d0d0d6;border-radius:50%"></div>
<div class="t" style="left:28.5px;top:537px;font-size:9.2px;color:#333">图案填充</div>
<div class="a" style="left:13px;top:563.5px;width:11px;height:11px;background:#fff;border:1px solid #d0d0d6;border-radius:2px"></div>
<div class="t" style="left:29px;top:564.5px;font-size:9.2px;color:#333">水印填充</div>
<div class="a" style="left:205px;top:566px;width:5px;height:44px;background:linear-gradient(180deg,#a0a0a0 0%,#a0a0a0 33%,#2fb867 36%,#4ac57a 100%);border-radius:3px;box-shadow:0 1px 3px rgba(0,0,0,.25)"></div>
<div class="a" style="left:65px;top:309px;width:148px;height:21.5px;background:#fff;border:1px solid #d6e3f5;border-right:none;border-radius:4px 0 0 4px;box-shadow:0 1px 2px rgba(0,0,0,.08)"></div>
<svg class="a" style="left:59px;top:307px" width="24" height="25" viewBox="0 0 24 25" ><circle cx="11" cy="11" r="10" fill="#1a6fdc"/><path d="M3 19 L7 18 L5 23 Z" fill="#1a6fdc"/><path d="M6.5 7h9M6.5 11h9M6 15.5h10M11 7v8.5" stroke="#fff" stroke-width="1.9"/></svg>
<div class="t" style="left:87px;top:313.5px;font-size:12px;font-weight:bold;color:#1a6fdc">中</div>
<svg class="a" style="left:106px;top:313px" width="14" height="14" viewBox="0 0 14 14" ><circle cx="3.5" cy="4" r="2" stroke="#1a6fdc" stroke-width="1.5" fill="none"/><path d="M10 8 C11 9 10 12 8 12.5" stroke="#1a6fdc" stroke-width="2.2" fill="none"/></svg>
<svg class="a" style="left:122px;top:312px" width="14" height="15" viewBox="0 0 14 15" ><path d="M3 11 L4 8 L10 2 L12 4 L6 10 Z" stroke="#1a6fdc" stroke-width="1.5" fill="#1a6fdc"/><path d="M2 13.5h10" stroke="#1a6fdc" stroke-width="1.5"/></svg>
<svg class="a" style="left:140px;top:312px" width="14" height="15" viewBox="0 0 14 15" ><circle cx="3.5" cy="11" r="2.3" stroke="#1a6fdc" stroke-width="1.5" fill="none"/><circle cx="10.5" cy="11" r="2.3" stroke="#1a6fdc" stroke-width="1.5" fill="none"/><path d="M5 9.3L11 2M9 9.3L3 2" stroke="#1a6fdc" stroke-width="1.6"/></svg>
<svg class="a" style="left:157px;top:313px" width="15" height="13" viewBox="0 0 15 13" ><rect x="1" y="2" width="13" height="9" rx="1.5" stroke="#1a6fdc" stroke-width="1.5" fill="none"/><path d="M3.5 5h1M6.5 5h1M9.5 5h1M4 8.3h7" stroke="#1a6fdc" stroke-width="1.2"/></svg>
<svg class="a" style="left:175px;top:312px" width="15" height="14" viewBox="0 0 15 14" ><path d="M4.5 1.5 L1 4.5 L3 7.5 L4 6.5 V13 H11 V6.5 L12 7.5 L14 4.5 L10.5 1.5 C9.5 3 5.5 3 4.5 1.5Z" fill="#1a6fdc"/></svg>
<svg class="a" style="left:194px;top:312px" width="14" height="15" viewBox="0 0 14 15" ><path d="M7 1 L9 3 L12 3 L12 6 L14 8 L12 10 L12 13 L9 13 L7 15 L5 13 L2 13 L2 10 L0 8 L2 6 L2 3 L5 3Z" fill="#1a6fdc" transform="scale(.95) translate(.4,0)"/><circle cx="7" cy="8" r="2.2" fill="#fff"/></svg></div><!--panel-end-->
<div id="status" class="a">
<svg class="a" style="left:11px;top:7px" width="15" height="9" viewBox="0 0 15 9"><path d="M1 .5v8M14 .5v8" stroke="#555" stroke-width="1"/><rect x="3.5" y=".5" width="8" height="8" stroke="#555" stroke-width="1" fill="none"/></svg>
<div class="a" style="left:37px;top:4px;width:1px;height:15px;background:#d6d8e0"></div>
<div class="a" style="left:38px;top:0;width:83px;height:22px;background:#eeeff5"></div>
<div class="t" style="left:45px;top:6.5px;font-size:9.6px;color:#222">页面-1</div>
<div class="a" style="left:109px;top:10px;width:0;height:0;border-left:2.5px solid transparent;border-right:2.5px solid transparent;border-top:3px solid #555"></div>
<div class="a" style="left:121px;top:4px;width:1px;height:15px;background:#d6d8e0"></div>
<svg class="a" style="left:136px;top:5px" width="12" height="12" viewBox="0 0 12 12"><path d="M6 1v10M1 6h10" stroke="#444" stroke-width="1.1"/></svg>
<div class="a" style="left:164px;top:4px;width:1px;height:15px;background:#d6d8e0"></div>
<div class="t" style="left:181px;top:6.5px;font-size:9.6px;color:#1c9a6e">页面-1</div>
<div class="a" style="left:225px;top:4px;width:1px;height:15px;background:#d6d8e0"></div>
<div class="t" style="left:1136px;top:6px;font-size:9.6px;color:#333">主题计数:&nbsp; <span style="font-size:10.5px">62</span></div>
<svg class="a" style="left:1208px;top:6px" width="14" height="11" viewBox="0 0 14 11"><rect x="1" y="1" width="12" height="9" rx="1.5" stroke="#555" stroke-width="1.1" fill="none"/><path d="M5 1v9M9 1v9" stroke="#555" stroke-width="1"/></svg>
<svg class="a" style="left:1244px;top:5px" width="13" height="13" viewBox="0 0 13 13"><rect x="1" y="1" width="11" height="11" rx="1" stroke="#555" stroke-width="1.1" fill="none"/><rect x="3.5" y="3.5" width="6" height="6" stroke="#555" stroke-width="1" fill="none"/></svg>
<svg class="a" style="left:1271px;top:5px" width="14" height="13" viewBox="0 0 14 13"><path d="M1 4V1h3M10 1h3v3M13 9v3h-3M4 12H1V9" stroke="#555" stroke-width="1.2" fill="none"/><rect x="5" y="4" width="4" height="5" fill="#555"/></svg>
<div class="a" style="left:1298px;top:11px;width:7px;height:1px;background:#777"></div>
<div class="a" style="left:1312px;top:11px;width:70px;height:1px;background:#888"></div>
<div class="a" style="left:1327.5px;top:5px;width:4px;height:10px;background:#fff;border:1px solid #777;border-radius:1px"></div>
<svg class="a" style="left:1384px;top:6px" width="10" height="10" viewBox="0 0 10 10"><path d="M5 .5v9M.5 5h9" stroke="#777" stroke-width="1"/></svg>
<div class="t" style="left:1402px;top:6.5px;font-size:9.6px;color:#333">100%</div>
<div class="a" style="left:1431.5px;top:10px;width:0;height:0;border-left:2px solid transparent;border-right:2px solid transparent;border-top:2.5px solid #777"></div>
<svg class="a" style="left:1448px;top:4.5px" width="15" height="14" viewBox="0 0 15 14"><path d="M1 5V1h4M10 1h4v4M14 9v4h-4M5 13H1V9" stroke="#555" stroke-width="1.2" fill="none"/></svg>
<svg class="a" style="left:1475px;top:4.5px" width="14" height="14" viewBox="0 0 14 14"><rect x="1" y="1" width="12" height="12" rx="1.5" stroke="#555" stroke-width="1.1" fill="none"/><path d="M3.5 7h7" stroke="#555" stroke-width="1.2"/></svg>
</div><!--status-end-->
</body></html>
